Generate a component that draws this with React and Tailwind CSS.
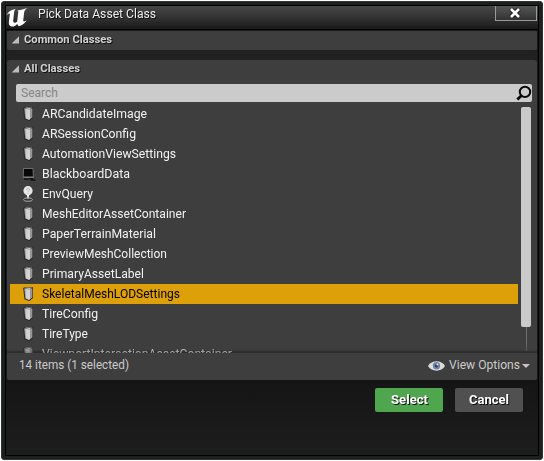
import React from "react";

const classes = [
  ["ARCandidateImage", "w-[105px]"],
  ["ARSessionConfig", "w-[94px]"],
  ["AutomationViewSettings", "w-[134px]"],
  ["BlackboardData", "w-[88px]"],
  ["EnvQuery", "w-[51px]"],
  ["MeshEditorAssetContainer", "w-[144px]"],
  ["PaperTerrainMaterial", "w-[114px]"],
  ["PreviewMeshCollection", "w-[125px]"],
  ["PrimaryAssetLabel", "w-[102px]"],
  ["SkeletalMeshLODSettings", "w-[138px]"],
  ["TireConfig", "w-[56px]"],
  ["TireType", "w-[46px]"],
  ["ViewportInteractionAssetContainer", "w-[190px]"],
];

function AssetIcon() {
  return (
    <svg width="16" height="16" viewBox="0 0 16 16">
      <path d="M3.2 2 6 1l7 .3v10.8L9.3 15 4.5 13.3Z" fill="#222" />
      <path d="M4 2.3 6.3 1.5l6.2.3-3 1.2Z" fill="#d0d0d0" />
      <path d="M4.2 2.6 9 3.3V14L5.2 12.5Z" fill="#999" />
      <path d="M5.4 2.9 8.6 3.3v10.2L6.1 12.6Z" fill="#cfcfcf" />
      <path d="M9 3.3 12.4 2.2v9.4L9 14Z" fill="#969696" />
      <path d="M8.5 3.4h1.2v10H8.5Z" fill="#f0f0f0" />
    </svg>
  );
}

function BoardIcon() {
  return (
    <svg width="16" height="16" viewBox="0 0 16 16">
      <path d="M3.5 2.5H13l.4 8.5H3.2Z" fill="#080808" stroke="#777" strokeWidth=".9" />
      <path d="M3 11.3h10.5" stroke="#909090" strokeWidth=".8" />
      <path d="M4 13h4.5M9 12.7h4M11 14h4.5" stroke="#101010" strokeWidth="1.5" />
    </svg>
  );
}

function QueryIcon() {
  return (
    <svg width="16" height="18" viewBox="0 0 16 18">
      <ellipse cx="8" cy="14.6" rx="4.5" ry="1.7" fill="#333" stroke="#aaa" />
      <path d="M8 14.5 6.5 9h3Z" fill="#fff" />
      <circle cx="8" cy="5.7" r="4.6" fill="#e6e6e6" />
      <path d="M6.6 4.8c0-1.8 3-1.7 3 0 0 1-1.6 1-1.6 2.3M8 8.1v.8" fill="none" stroke="#b5b5b5" />
    </svg>
  );
}

function Label({ children, width, className }) {
  return (
    <svg className={`${width} h-5 shrink-0 overflow-visible ${className || ""}`}>
      <text x="0" y="14" textLength="100%" lengthAdjust="spacingAndGlyphs" fill="currentColor">{children}</text>
    </svg>
  );
}

function SectionTitle({ children, width }) {
  return (
    <div className="flex h-[15px] items-center pl-1">
      <svg className="mt-px" width="9" height="9" viewBox="0 0 9 9"><path d="M8 1.2V8.5H.7Z" fill="#bcbcbc" /></svg>
      <Label width={width} className="ml-1 text-[11px] font-bold text-[#d2d2d2] [filter:drop-shadow(1px_1px_0_#111)]">{children}</Label>
    </div>
  );
}

export default function App() {
  return (
    <main className="h-[461px] w-[544px] overflow-hidden bg-white p-px font-[Roboto,sans-serif] text-[12px]">
      <div className="h-[459px] w-[542px] rounded-[3px] border border-[#303333] bg-[#1d1f1f] p-[3px]">
        <div className="flex h-[451px] w-[534px] flex-col border border-black bg-[#191919]">
          <header className="flex h-[24px] shrink-0 border-b border-black bg-gradient-to-b from-[#474747] via-[#333] to-[#191919]">
            <svg className="shrink-0" width="23" height="22" viewBox="6 6 23 22">
              <path d="M6.3 15.6C8 11.6 11.3 9.4 15.6 9c-1 .9-1.3 2-1.5 3.2l-.9 8.3c-.2 2.6 2 2.8 4 .9l1.1-9.6c0-.7-.5-1-1.3-1.2 2.7-.4 5.5-1.2 10.3-2.6-1.8 1.4-2.9 2.7-3.2 4.6l-.8 7.3c-.2 1.9 1 2 3.4.4-2 3.5-4.9 5.4-8 6l-1.6-2.4c-1.8 2-3.6 2.9-5.4 2.6-2.4-.5-3.1-2.2-2.8-4.8l.9-6.9c.2-1.9-1.5-1.7-3.5.8Z" fill="#fff" />
            </svg>
            <Label width="w-[118px]" className="-mt-[2px] ml-[9px] text-[#eee] [filter:drop-shadow(1px_1px_0_#111)]">Pick Data Asset Class</Label>
            <button aria-label="Close" className="ml-auto mr-px flex h-[15px] w-[42px] items-center justify-center border border-t-0 border-[#999] bg-gradient-to-b from-[#555] to-[#333]">
              <svg className="-mt-px mr-[2px]" width="12" height="12" viewBox="0 0 12 12"><path d="m2 2 8 8M10 2 2 10" stroke="#111" strokeWidth="4.5" /><path d="m2 2 8 8M10 2 2 10" stroke="#fff" strokeWidth="2.7" /></svg>
            </button>
          </header>
          <div className="mx-px mt-px shrink-0 bg-[#212121]">
            <section className="h-[19px] rounded-[2px] bg-[#3e3e3e]"><SectionTitle width="w-[88px]">Common Classes</SectionTitle></section>
            <section className="mt-[10px] h-[320px] rounded-[3px] bg-[#3e3e3e]">
              <SectionTitle width="w-[56px]">All Classes</SectionTitle>
              <div className="ml-[9px] mt-[9px] flex h-[18px] w-[516px] items-center rounded-[2px] bg-[#cbcbcb] pl-[5px]">
                <Label width="w-[37px]" className="text-[#858585]">Search</Label>
                <svg className="ml-auto" width="16" height="16" viewBox="0 0 16 16"><circle cx="9" cy="6.9" r="5.2" fill="none" stroke="#080808" strokeWidth="2" /><path d="m5.3 10.7-4 3.8" stroke="#080808" strokeWidth="2.8" /></svg>
              </div>
              <div className="flex h-[251px] overflow-hidden pl-[3px] pt-[2px] [mask-image:linear-gradient(#000_0_240px,#000b_245px,#0008_251px)]">
                <div className="w-[508px] shrink-0">
                  {classes.map(([name, width]) => (
                    <div key={name} className={`flex h-5 items-center pl-[10px] ${name === "SkeletalMeshLODSettings" ? "bg-[#dda009] text-black" : "text-[#f2f2f2]"}`}>
                      <span className="w-[22px] shrink-0">{name === "BlackboardData" ? <BoardIcon /> : name === "EnvQuery" ? <QueryIcon /> : <AssetIcon />}</span>
                      <Label width={width}>{name}</Label>
                    </div>
                  ))}
                </div>
                <div className="ml-[3px] mt-[3px] flex w-[10px] flex-col items-center">
                  <div className="h-[220px] w-[10px] shrink-0 rounded-[2px] bg-[#cacaca]" />
                  <div className="h-6 w-px bg-[#707070]" />
                </div>
              </div>
              <footer className="flex h-[27px] items-center rounded-b-[3px] bg-[#3e3e3e] pl-3 pr-[7px] text-[#cbcbcb] shadow-[0_-2px_2px_#2229]">
                <Label width="w-[110px]" className="-mt-[3px]">14 items (1 selected)</Label>
                <svg className="-mt-[2px] ml-auto" width="17" height="12" viewBox="0 0 17 12"><path d="M0 6C3.5-.2 13.5-.2 17 6c-3.5 6.2-13.5 6.2-17 0Z" fill="#ddd" /><circle cx="8.5" cy="5.7" r="3.7" fill="#7186a3" /><circle cx="8.5" cy="5.7" r="1.8" fill="#2d4260" /><circle cx="9.4" cy="4.5" r="1" fill="#eee" /></svg>
                <Label width="w-[71px]" className="-mt-[3px] ml-1">View Options</Label>
                <svg className="-mt-[2px] ml-[2px]" width="8" height="4"><path d="M0 0h8L4 4Z" fill="#c4c4c4" /></svg>
              </footer>
            </section>
          </div>
          <div className="flex flex-1 items-start justify-end gap-3 bg-gradient-to-b from-[#151515] to-[#1d1d1d] pr-[15px] pt-2 text-[12px] font-bold text-white">
            <button className="flex h-6 w-[68px] items-center justify-center rounded-[2px] bg-[#4fa64f]"><Label width="w-[37px]" className="[filter:drop-shadow(1px_1px_0_#111)]">Select</Label></button>
            <button className="flex h-6 w-[68px] items-center justify-center rounded-[2px] bg-[#505050]"><Label width="w-[40px]" className="[filter:drop-shadow(1px_1px_0_#111)]">Cancel</Label></button>
          </div>
        </div>
      </div>
    </main>
  );
}
